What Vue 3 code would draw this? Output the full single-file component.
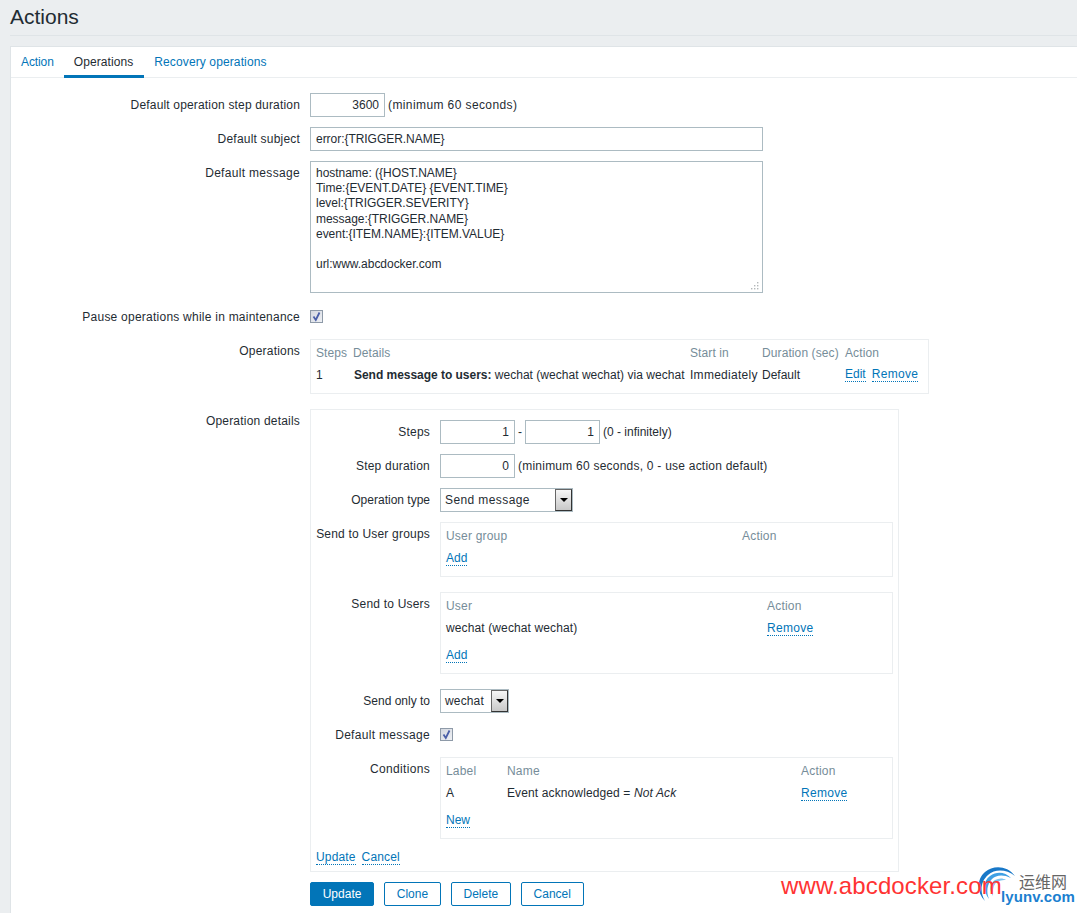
<script setup>
const ops = { step: '1', start: 'Immediately', duration: 'Default' }
const message = `hostname: ({HOST.NAME}
Time:{EVENT.DATE} {EVENT.TIME}
level:{TRIGGER.SEVERITY}
message:{TRIGGER.NAME}
event:{ITEM.NAME}:{ITEM.VALUE}

url:www.abcdocker.com`
</script>

<template>
  <div class="page">
    <header class="head"><h1>Actions</h1></header>
    <main class="card">
      <nav class="tabs">
        <a class="tab">Action</a>
        <a class="tab active">Operations</a>
        <a class="tab">Recovery operations</a>
      </nav>
      <form class="form" @submit.prevent>
        <div class="row">
          <label class="lbl first-lbl">Default operation step duration</label>
          <div class="ctl"><input class="inp num w75" value="3600" /><span class="hint-a">(minimum 60 seconds)</span></div>
        </div>
        <div class="row">
          <label class="lbl">Default subject</label>
          <div class="ctl"><input class="inp wide" value="error:{TRIGGER.NAME}" /></div>
        </div>
        <div class="row">
          <label class="lbl loose">Default message</label>
          <div class="ctl area-wrap">
            <textarea class="area" :value="message"></textarea>
            <svg class="grip" viewBox="0 0 9 9">
              <rect x="6" y="0" width="1.4" height="1.4" />
              <rect x="3" y="3" width="1.4" height="1.4" />
              <rect x="6" y="3" width="1.4" height="1.4" />
              <rect x="0" y="6" width="1.4" height="1.4" />
              <rect x="3" y="6" width="1.4" height="1.4" />
              <rect x="6" y="6" width="1.4" height="1.4" />
            </svg>
          </div>
        </div>
        <div class="row pause">
          <label class="lbl pause-lbl">Pause operations while in maintenance</label>
          <div class="ctl top"><span class="check"><svg viewBox="0 0 11 11"><path d="M2.5 5.5 L4.8 9 L8.5 1.5" /></svg></span></div>
        </div>
        <div class="row">
          <label class="lbl">Operations</label>
          <div class="box ops">
            <table>
              <colgroup><col class="c1" /><col class="c2" /><col class="c3" /><col class="c4" /><col class="c5" /></colgroup>
              <thead>
                <tr><th>Steps</th><th>Details</th><th>Start in</th><th>Duration (sec)</th><th>Action</th></tr>
              </thead>
              <tbody>
                <tr>
                  <td>{{ ops.step }}</td>
                  <td><b>Send message to users:</b> <span class="via">wechat (wechat wechat) via wechat</span></td>
                  <td class="imm">{{ ops.start }}</td>
                  <td>{{ ops.duration }}</td>
                  <td><span class="links"><a class="dot">Edit</a><a class="dot rm">Remove</a></span></td>
                </tr>
              </tbody>
            </table>
          </div>
        </div>
        <div class="row details-row">
          <label class="lbl">Operation details</label>
          <div class="box details">
            <div class="sub">
              <label class="lbl">Steps</label>
              <div class="ctl">
                <input class="inp num w75" value="1" /><span>-</span><input class="inp num w75" value="1" /><span>(0 - infinitely)</span>
              </div>
            </div>
            <div class="sub">
              <label class="lbl">Step duration</label>
              <div class="ctl"><input class="inp num w75" value="0" /><span class="hint-b">(minimum 60 seconds, 0 - use action default)</span></div>
            </div>
            <div class="sub">
              <label class="lbl tight">Operation type</label>
              <div class="ctl">
                <div class="select w132"><span class="sel-long">Send message</span><i class="btn"><em></em></i></div>
              </div>
            </div>
            <div class="sub spaced">
              <label class="lbl">Send to User groups</label>
              <div class="box inner groups">
                <div class="grid g-group"><span class="th">User group</span><span class="th">Action</span></div>
                <div class="line"><a class="dot">Add</a></div>
              </div>
            </div>
            <div class="sub spaced">
              <label class="lbl">Send to Users</label>
              <div class="box inner">
                <div class="grid g-user"><span class="th">User</span><span class="th">Action</span></div>
                <div class="grid g-user line"><span class="cell">wechat (wechat wechat)</span><span><a class="dot rm">Remove</a></span></div>
                <div class="line add"><a class="dot">Add</a></div>
              </div>
            </div>
            <div class="sub">
              <label class="lbl tight">Send only to</label>
              <div class="ctl">
                <div class="select w69"><span class="sel-short">wechat</span><i class="btn"><em></em></i></div>
              </div>
            </div>
            <div class="sub">
              <label class="lbl loose">Default message</label>
              <div class="ctl top"><span class="check low"><svg viewBox="0 0 11 11"><path d="M2.5 5.5 L4.8 9 L8.5 1.5" /></svg></span></div>
            </div>
            <div class="sub">
              <label class="lbl loose">Conditions</label>
              <div class="box inner">
                <div class="grid g-cond"><span class="th">Label</span><span class="th">Name</span><span class="th">Action</span></div>
                <div class="grid g-cond line"><span>A</span><span class="cell">Event acknowledged = <i>Not Ack</i></span><span><a class="dot rm">Remove</a></span></div>
                <div class="line add"><a class="dot">New</a></div>
              </div>
            </div>
            <div class="foot"><a class="dot">Update</a><a class="dot">Cancel</a></div>
          </div>
        </div>
        <div class="buttons">
          <button class="b primary">Update</button>
          <button class="b">Clone</button>
          <button class="b">Delete</button>
          <button class="b">Cancel</button>
        </div>
      </form>
    </main>
    <div class="mark">
      <svg class="mark-logo" viewBox="0 0 40 38">
        <path class="a1" d="M8 35 C0 27 -1 14 8 6 C16 -1 30 -1 38 10 C29 3 18 3 11 9 C3 16 3 27 8 35 Z" />
        <path class="a2" d="M12 33 C6 25 6 15 13 10 C20 5 28 6 34 12 C26 8 19 9 15 13 C10 18 9 26 12 33 Z" />
        <path class="a3" d="M16 30 C12 24 13 17 18 14 C22 12 26 12 29 14 C24 14 20 15 18 18 C16 21 15 26 16 30 Z" />
      </svg>
      <span class="mark-url">www.abcdocker.com</span>
      <span class="mark-cn">运维网</span>
      <span class="mark-com">lyunv.com</span>
    </div>
  </div>
</template>

<style>
html, body { margin: 0; background: #ebeef0; }
</style>

<style scoped>
.page {
  position: relative;
  width: 1077px;
  height: 913px;
  overflow: hidden;
  background: #ebeef0;
  font: 12px/14px "Liberation Sans", Arial, sans-serif;
  color: #1f2c33;
  padding-left: 10px;
  box-sizing: border-box;
}
.head { height: 36px; border-bottom: 1px solid #dfe4e7; margin-bottom: 10px; box-sizing: border-box; }
h1 { margin: 0; padding-top: 6px; font-size: 21px; line-height: 22px; font-weight: 400; }
.card {
  width: 1100px;
  height: 900px;
  background: #fff;
  border: 1px solid #dfe4e7;
  box-sizing: border-box;
}
.tabs { display: flex; height: 30px; border-bottom: 1px solid #ebeef0; }
.tab { padding: 0 10px; height: 30px; line-height: 30px; color: #0275b8; box-sizing: border-box; letter-spacing: 0.12px; }
.tab:first-child { letter-spacing: -0.1px; }
.tab.active { color: #1f2c33; border-bottom: 3px solid #0275b8; height: 31px; padding-right: 11px; letter-spacing: 0.08px; }
.form { display: flex; flex-direction: column; gap: 10px; padding-top: 15px; }
.row { display: grid; grid-template-columns: 289px auto; column-gap: 10px; justify-content: start; }
.pause { height: 26px; }
.lbl { text-align: right; line-height: 14px; padding-top: 5px; letter-spacing: 0.2px; }
.lbl.first-lbl { letter-spacing: 0.17px; }
.lbl.tight { letter-spacing: 0; }
.lbl.loose { letter-spacing: 0.32px; }
.lbl.pause-lbl { letter-spacing: 0.24px; padding-top: 7px; }
.ctl { display: flex; align-items: center; gap: 3px; }
.ctl.top { align-items: flex-start; }
.hint-a { letter-spacing: 0.4px; }
.hint-b { letter-spacing: 0.23px; }
.inp {
  height: 24px;
  box-sizing: border-box;
  border: 1px solid #acbbc2;
  padding: 0 5px;
  margin: 0;
  font: inherit;
  color: inherit;
  outline: none;
  background: #fff;
}
.num { text-align: right; }
.w75 { width: 75px; }
.wide { width: 453px; letter-spacing: -0.04px; }
.area-wrap { position: relative; }
.area {
  display: block;
  width: 453px;
  height: 132px;
  box-sizing: border-box;
  border: 1px solid #acbbc2;
  padding: 4px 5px 3px;
  margin: 0;
  font: 12px/15.17px "Liberation Sans", Arial, sans-serif;
  letter-spacing: -0.03px;
  color: inherit;
  outline: none;
  resize: none;
}
.grip { position: absolute; right: 3px; bottom: 2px; width: 9px; height: 9px; }
.grip rect { fill: #b4b8ba; }
.check {
  display: block;
  width: 13px;
  height: 13px;
  box-sizing: border-box;
  margin-top: 7px;
  border: 1px solid #8e9aa8;
  background: linear-gradient(135deg, #d4d8e0, #eef0f4);
}
.check.low { margin-top: 5px; }
.check svg { display: block; width: 11px; height: 11px; }
.check path { fill: none; stroke: #4a5fa8; stroke-width: 1.8; }
.box { border: 1px solid #ebeef0; box-sizing: border-box; background: #fff; }
.ops { width: 619px; height: 55px; padding: 6px 5px 0; }
table { border-collapse: collapse; table-layout: fixed; width: 607px; }
.c1 { width: 37px; }
.c2 { width: 337px; }
.c3 { width: 72px; }
.c4 { width: 83px; }
th, td { padding: 0; text-align: left; white-space: nowrap; }
th { font-weight: 400; color: #768d99; height: 14px; letter-spacing: 0.1px; }
td { padding-top: 7px; }
td b { font-weight: 700; padding-left: 1px; letter-spacing: -0.03px; }
.via { letter-spacing: 0.03px; }
.imm { letter-spacing: 0.28px; }
.links { display: inline-flex; gap: 6px; }
.dot {
  color: #0275b8;
  border-bottom: 1px dotted #0275b8;
  display: inline-block;
  line-height: 14px;
}
.dot.rm { letter-spacing: 0.3px; }
.cell { letter-spacing: 0.12px; }
.details-row { margin-top: 5px; }
.details {
  width: 589px;
  height: 463px;
  padding-top: 10px;
  display: flex;
  flex-direction: column;
  gap: 10px;
}
.sub { display: grid; grid-template-columns: 119px auto; column-gap: 10px; justify-content: start; min-height: 24px; }
.sub.spaced { margin-bottom: 5px; }
.inner { width: 453px; padding: 6px 5px 0; }
.groups { height: 55px; }
.grid { display: grid; }
.th { color: #768d99; letter-spacing: 0.2px; }
.g-group { grid-template-columns: 296px auto; }
.g-user { grid-template-columns: 321px auto; }
.g-cond { grid-template-columns: 61px 294px auto; }
.line { margin-top: 8px; }
.line.add { margin-top: 12px; margin-bottom: 10px; }
.select {
  height: 24px;
  box-sizing: border-box;
  border: 1px solid #acbbc2;
  display: flex;
  align-items: center;
  justify-content: space-between;
  padding-left: 4px;
  background: #fff;
}
.sel-long { letter-spacing: 0.4px; }
.sel-short { letter-spacing: 0.15px; }
.w132 { width: 133px; }
.w69 { width: 69px; }
.btn {
  width: 17px;
  height: 22px;
  box-sizing: border-box;
  border: 1px solid #666;
  border-right-color: #333;
  border-bottom-color: #333;
  background: linear-gradient(#f6f6f6, #c8c8c8);
  display: flex;
  align-items: center;
  justify-content: center;
}
.btn em {
  width: 0;
  height: 0;
  border-left: 4px solid transparent;
  border-right: 4px solid transparent;
  border-top: 4px solid #000;
}
.foot { display: flex; gap: 6px; padding: 1px 0 0 5px; letter-spacing: 0.15px; }
.buttons { display: flex; gap: 10px; padding-left: 299px; }
.b {
  height: 24px;
  padding: 0 11.7px;
  border: 1px solid #0275b8;
  border-radius: 2px;
  background: #fff;
  color: #0275b8;
  font: inherit;
  line-height: 22px;
  box-sizing: border-box;
}
.b.primary { background: #0275b8; color: #fff; }
.mark { position: absolute; inset: 0; pointer-events: none; }
.mark-url { position: absolute; left: 781px; top: 872px; font-size: 24px; line-height: 28px; letter-spacing: 0.12px; color: #f33; }
.mark-logo { position: absolute; left: 977px; top: 866px; width: 40px; height: 38px; }
.a1 { fill: #1878c8; }
.a2 { fill: #3fa0e4; }
.a3 { fill: #7cc4f0; }
.mark-cn { position: absolute; left: 1019px; top: 873px; font: 16px/16px "Noto Sans CJK SC", sans-serif; color: #666; }
.mark-com { position: absolute; left: 1001px; top: 890px; font: 700 15px/14px "Liberation Sans", sans-serif; letter-spacing: 0.1px; color: #1c7fd0; }
</style>
